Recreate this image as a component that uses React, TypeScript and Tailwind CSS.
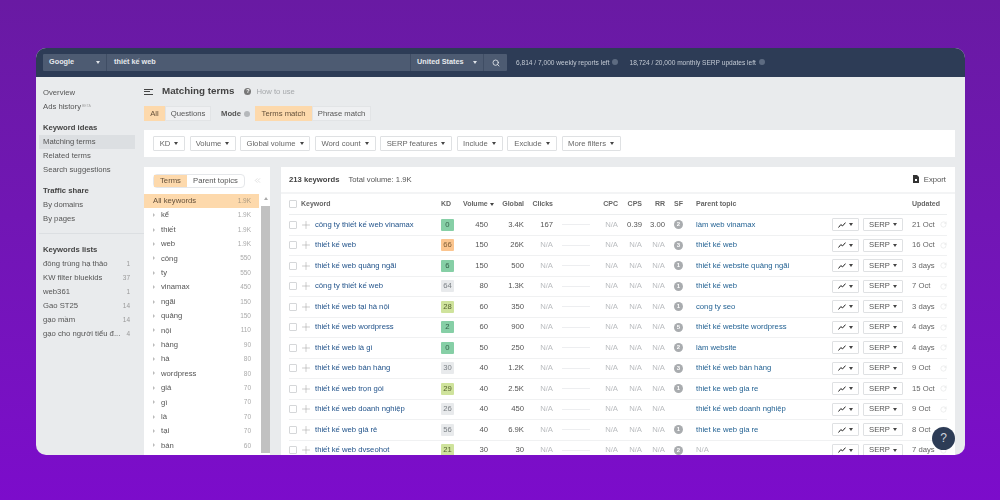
import React from 'react';
import { ChevronsLeft, Plus, RotateCw, Search } from 'lucide-react';

const SIDE_GROUPS = [
  { title: '', items: ['Overview', 'Ads history'] },
  { title: 'Keyword ideas', items: ['Matching terms', 'Related terms', 'Search suggestions'] },
  { title: 'Traffic share', items: ['By domains', 'By pages'] },
];

const LISTS = [
  ['đông trùng hạ thảo', '1'],
  ['KW filter bluekids', '37'],
  ['web361', '1'],
  ['Gao ST25', '14'],
  ['gạo mầm', '14'],
  ['gạo cho người tiểu đ...', '4'],
];

const FILTERS = [
  ['KD', 'w-[32px]'],
  ['Volume', 'w-[46px]'],
  ['Global volume', 'w-[70px]'],
  ['Word count', 'w-[61px]'],
  ['SERP features', 'w-[72px]'],
  ['Include', 'w-[46px]'],
  ['Exclude', 'w-[50px]'],
  ['More filters', 'w-[59px]'],
];

const TERMS = [
  ['kể', '1.9K'], ['thiết', '1.9K'], ['web', '1.9K'], ['công', '550'], ['ty', '550'],
  ['vinamax', '450'], ['ngãi', '150'], ['quảng', '150'], ['nội', '110'], ['hàng', '90'],
  ['hà', '80'], ['wordpress', '80'], ['giá', '70'], ['gì', '70'], ['là', '70'], ['tại', '70'], ['bán', '60'],
];

const KD_COLORS: Record<string, string> = {
  green: 'bg-[#86cfa6] text-[#35614a]',
  orange: 'bg-[#fbc58f] text-[#806038]',
  gray: 'bg-[#e8eaec] text-[#7c8186]',
  lime: 'bg-[#cfe39c] text-[#55632f]',
};

const ROWS = [
  { kw: 'công ty thiết kế web vinamax', kd: '0', kc: 'green', vol: '450', glob: '3.4K', clicks: '167', cpc: 'N/A', cps: '0.39', rr: '3.00', sf: '2', topic: 'làm web vinamax', upd: '21 Oct' },
  { kw: 'thiết kế web', kd: '66', kc: 'orange', vol: '150', glob: '26K', clicks: 'N/A', cpc: 'N/A', cps: 'N/A', rr: 'N/A', sf: '3', topic: 'thiết kế web', upd: '16 Oct' },
  { kw: 'thiết kế web quảng ngãi', kd: '6', kc: 'green', vol: '150', glob: '500', clicks: 'N/A', cpc: 'N/A', cps: 'N/A', rr: 'N/A', sf: '1', topic: 'thiết kế website quảng ngãi', upd: '3 days' },
  { kw: 'công ty thiết kế web', kd: '64', kc: 'gray', vol: '80', glob: '1.3K', clicks: 'N/A', cpc: 'N/A', cps: 'N/A', rr: 'N/A', sf: '1', topic: 'thiết kế web', upd: '7 Oct' },
  { kw: 'thiết kế web tại hà nội', kd: '28', kc: 'lime', vol: '60', glob: '350', clicks: 'N/A', cpc: 'N/A', cps: 'N/A', rr: 'N/A', sf: '1', topic: 'cong ty seo', upd: '3 days' },
  { kw: 'thiết kế web wordpress', kd: '2', kc: 'green', vol: '60', glob: '900', clicks: 'N/A', cpc: 'N/A', cps: 'N/A', rr: 'N/A', sf: '5', topic: 'thiết kế website wordpress', upd: '4 days' },
  { kw: 'thiết kế web là gì', kd: '0', kc: 'green', vol: '50', glob: '250', clicks: 'N/A', cpc: 'N/A', cps: 'N/A', rr: 'N/A', sf: '2', topic: 'làm website', upd: '4 days' },
  { kw: 'thiết kế web bán hàng', kd: '30', kc: 'gray', vol: '40', glob: '1.2K', clicks: 'N/A', cpc: 'N/A', cps: 'N/A', rr: 'N/A', sf: '3', topic: 'thiết kế web bán hàng', upd: '9 Oct' },
  { kw: 'thiết kế web trọn gói', kd: '29', kc: 'lime', vol: '40', glob: '2.5K', clicks: 'N/A', cpc: 'N/A', cps: 'N/A', rr: 'N/A', sf: '1', topic: 'thiet ke web gia re', upd: '15 Oct' },
  { kw: 'thiết kế web doanh nghiệp', kd: '26', kc: 'gray', vol: '40', glob: '450', clicks: 'N/A', cpc: 'N/A', cps: 'N/A', rr: 'N/A', sf: '', topic: 'thiết kế web doanh nghiệp', upd: '9 Oct' },
  { kw: 'thiết kế web giá rẻ', kd: '56', kc: 'gray', vol: '40', glob: '6.9K', clicks: 'N/A', cpc: 'N/A', cps: 'N/A', rr: 'N/A', sf: '1', topic: 'thiet ke web gia re', upd: '8 Oct' },
  { kw: 'thiết kế web dvseohot', kd: '21', kc: 'lime', vol: '30', glob: '30', clicks: 'N/A', cpc: 'N/A', cps: 'N/A', rr: 'N/A', sf: '2', topic: 'N/A', upd: '7 days' },
];

function Caret({ className = 'border-t-[#444]' }: { className?: string }) {
  return <span className={`inline-block w-0 h-0 border-x-[2.5px] border-x-transparent border-t-[3px] ${className}`} />;
}

function NA({ value, className }: { value: string; className: string }) {
  return <div className={`${className} text-right ${value === 'N/A' ? 'text-[#b9bcbf]' : 'text-[#555]'}`}>{value}</div>;
}

function Sidebar() {
  return (
    <aside className="w-[108px] shrink-0 pt-[9px] pl-[3px] text-[7.7px] text-[#555]">
      {SIDE_GROUPS.map((g, i) => (
        <div key={i} className="mb-[7px]">
          {g.title && <div className="h-[14px] leading-[14px] pl-1 font-bold text-[#444]">{g.title}</div>}
          {g.items.map(item => (
            <div key={item} className={`h-[14px] leading-[14px] pl-1 w-[96px] ${item === 'Matching terms' ? 'bg-[#dcdfe2]' : ''}`}>
              {item}
              {item === 'Ads history' && <sup className="text-[3.5px] text-[#aaa] ml-px">BETA</sup>}
            </div>
          ))}
        </div>
      ))}
      <div className="border-t border-[#dcdfe2] w-[105px] mt-[6px] mb-[9px]" />
      <div className="h-[14px] leading-[14px] pl-1 font-bold text-[#444]">Keywords lists</div>
      {LISTS.map(([name, count]) => (
        <div key={name} className="h-[14px] w-[91px] leading-[14px] pl-1 flex justify-between">
          <span className="truncate">{name}</span>
          <span className="text-[6.5px] text-[#999]">{count}</span>
        </div>
      ))}
    </aside>
  );
}

function TermsPanel() {
  return (
    <div className="w-[126px] h-[288px] shrink-0 bg-white overflow-hidden">
      <div className="h-[27px] flex items-center pl-[9px] pr-[8px] justify-between">
        <div className="flex h-[14px] text-[7.7px] leading-[12px] rounded-sm border border-[#e5e7ea]">
          <span className="w-[33px] bg-[#fdd9ac] text-[#64503a] text-center">Terms</span>
          <span className="w-[57px] text-[#555] text-center">Parent topics</span>
        </div>
        <ChevronsLeft size={9} strokeWidth={1.2} className="text-[#bbb]" />
      </div>
      <div className="flex">
        <div className="w-[115px] mr-[2px]">
          <div className="h-[14px] pl-[9px] pr-[8px] flex items-center justify-between bg-[#fdd9ac] text-[7.7px] text-[#64503a]">
            <span>All keywords</span>
            <span className="text-[6.5px] text-[#ab9a80]">1.9K</span>
          </div>
          {TERMS.map(([term, vol]) => (
            <div key={term} className="h-[14.4px] pl-[9px] pr-[8px] flex items-center text-[7.7px] text-[#555]">
              <span className="w-0 h-0 border-y-[2px] border-y-transparent border-l-[2.5px] border-l-[#bbb] mr-[6px]" />
              <span className="flex-1">{term}</span>
              <span className="text-[6.5px] text-[#aaa]">{vol}</span>
            </div>
          ))}
        </div>
        <div className="w-[9px] flex flex-col">
          <div className="h-[12px] flex justify-center pt-[3px]">
            <span className="w-0 h-0 border-x-[2.5px] border-x-transparent border-b-[3px] border-b-[#aaa]" />
          </div>
          <div className="flex-1 bg-[#c1c1c1] h-[260px]" />
        </div>
      </div>
    </div>
  );
}

function ChartIcon() {
  return (
    <svg width="8" height="6" viewBox="0 0 8 6" fill="none" stroke="#222" strokeWidth="1">
      <polyline points="0.5,5.5 2.8,2.6 4.6,3.9 7.5,0.6" />
    </svg>
  );
}

function KeywordRow({ row }: { row: (typeof ROWS)[number] }) {
  return (
    <div className="h-[20.5px] flex items-center border-b border-[#f0f1f2] text-[7.7px]">
      <span className="w-[8px] h-[8px] border border-[#d5d7d9] rounded-[1px] mr-[3px] shrink-0" />
      <Plus size={12} strokeWidth={1} className="text-[#999] mr-[3px] shrink-0" />
      <span className="w-[126px] shrink-0 text-[#1f5189] truncate">{row.kw}</span>
      <span className={`w-[13px] h-[12px] leading-[12px] text-center shrink-0 rounded-[1px] ${KD_COLORS[row.kc]}`}>{row.kd}</span>
      <div className="w-[34px] text-right text-[#555] shrink-0">{row.vol}</div>
      <div className="w-[36px] text-right text-[#555] shrink-0">{row.glob}</div>
      <NA value={row.clicks} className="w-[29px] shrink-0" />
      <div className="w-[28px] h-px bg-[#edeef0] ml-[9px] shrink-0" />
      <NA value={row.cpc} className="w-[28px] shrink-0" />
      <NA value={row.cps} className="w-[24px] shrink-0" />
      <NA value={row.rr} className="w-[23px] shrink-0" />
      <div className="w-[9px] ml-[9px] shrink-0">
        {row.sf && (
          <span className="block w-[9px] h-[9px] rounded-full bg-[#a9acaf] text-white text-[6px] leading-[9px] text-center font-bold">{row.sf}</span>
        )}
      </div>
      <div className={`w-[136px] ml-[13px] shrink-0 truncate ${row.topic === 'N/A' ? 'text-[#b9bcbf]' : 'text-[#1f5f91]'}`}>{row.topic}</div>
      <span className="w-[27px] h-[13px] border border-[#dfe1e3] rounded-[1px] flex items-center justify-center gap-[3px] shrink-0">
        <ChartIcon />
        <Caret />
      </span>
      <span className="w-[40px] h-[13px] ml-[4px] border border-[#dfe1e3] rounded-[1px] flex items-center justify-center gap-[3px] text-[#555] shrink-0">
        SERP
        <Caret />
      </span>
      <span className="w-[28px] ml-[9px] text-[#666] shrink-0 whitespace-nowrap">{row.upd}</span>
      <RotateCw size={7} strokeWidth={1} className="text-[#c4c6c8] shrink-0" />
    </div>
  );
}

function KeywordsPanel() {
  return (
    <div className="flex-1 h-[288px] ml-[11px] bg-white overflow-hidden">
      <div className="h-[27px] flex items-center justify-between pl-[8px] pr-[9px] border-b-2 border-[#f3f4f5] text-[7.7px] text-[#555]">
        <div className="flex gap-[9px]">
          <span className="font-bold text-[#444]">213 keywords</span>
          <span>Total volume: 1.9K</span>
        </div>
        <div className="flex items-center gap-[4px]">
          <svg width="8" height="8" viewBox="0 0 8 8">
            <path d="M1 0h4l2 2v6H1z" fill="#333" />
            <rect x="3" y="4" width="2" height="2" fill="#fff" />
          </svg>
          Export
        </div>
      </div>
      <div className="pl-[8px] pr-[8px]">
        <div className="h-[21px] flex items-center border-b border-[#eceeef] text-[7px] font-bold text-[#666]">
          <span className="w-[8px] h-[8px] border border-[#d5d7d9] rounded-[1px] mr-[4px] shrink-0" />
          <span className="w-[140px] shrink-0">Keyword</span>
          <span className="w-[22px] shrink-0">KD</span>
          <span className="w-[32px] shrink-0 whitespace-nowrap flex items-center gap-[2px]">Volume <Caret /></span>
          <span className="w-[29px] text-right shrink-0">Global</span>
          <span className="w-[29px] text-right shrink-0">Clicks</span>
          <span className="w-[65px] text-right shrink-0">CPC</span>
          <span className="w-[24px] text-right shrink-0">CPS</span>
          <span className="w-[23px] text-right shrink-0">RR</span>
          <span className="w-[18px] text-right shrink-0">SF</span>
          <span className="w-[216px] ml-[13px] shrink-0">Parent topic</span>
          <span className="shrink-0">Updated</span>
        </div>
        {ROWS.map(row => <KeywordRow key={row.kw} row={row} />)}
      </div>
    </div>
  );
}

export default function App() {
  return (
    <div
      className="w-[1000px] h-[500px] overflow-hidden bg-gradient-to-b from-[#691aa3] to-[#7c0ccb] pt-[48px] pl-[36px]"
      style={{ fontFamily: '"Liberation Sans", Arial, sans-serif' }}
    >
      <div className="relative w-[929px] h-[407px] rounded-[10px] overflow-hidden bg-[#e9ebed] flex flex-col blur-[0.25px]">
        {/* Top bar */}
        <header className="h-[29px] shrink-0 bg-[#2d3c56] flex items-center pl-[7px] text-[7.3px]">
          <div className="h-[17px] flex items-center bg-[#4d5b72] text-[#e6e9ed] rounded-[1px]">
            <div className="w-[64px] h-full flex items-center justify-between pl-[6px] pr-[6px] border-r border-[#3f4d64] font-bold">
              Google <Caret className="border-t-[#dfe3e8]" />
            </div>
            <div className="w-[303px] pl-[7px] font-bold">thiết kế web</div>
            <div className="w-[74px] h-full flex items-center justify-between pl-[6px] pr-[6px] border-x border-[#3f4d64] font-bold">
              United States <Caret className="border-t-[#dfe3e8]" />
            </div>
            <div className="w-[23px] flex justify-center">
              <Search size={8} strokeWidth={2.5} />
            </div>
          </div>
          <div className="ml-[9px] flex items-center gap-[3px] text-[6.6px] text-[#c3cad4]">
            6,814 / 7,000 weekly reports left
            <span className="w-[6px] h-[6px] rounded-full bg-[#5d6b81]" />
          </div>
          <div className="ml-[11px] flex items-center gap-[3px] text-[6.6px] text-[#c3cad4]">
            18,724 / 20,000 monthly SERP updates left
            <span className="w-[6px] h-[6px] rounded-full bg-[#5d6b81]" />
          </div>
        </header>

        <div className="flex flex-1 min-h-0">
          <Sidebar />
          <main className="flex-1 min-w-0 pr-[10px]">
            {/* Title */}
            <div className="h-[29px] flex items-center text-[#444]">
              <div className="w-[9px] flex flex-col gap-[1.5px] mr-[9px]">
                <span className="h-px bg-[#444]" />
                <span className="h-px bg-[#444] w-[6px]" />
                <span className="h-px bg-[#444]" />
              </div>
              <h1 className="text-[9.8px] font-bold">Matching terms</h1>
              <span className="w-[7px] h-[7px] rounded-full bg-[#777] text-white text-[5.5px] leading-[7px] text-center font-bold ml-[10px]">?</span>
              <span className="ml-[5px] text-[7.7px] text-[#a5a8ab]">How to use</span>
            </div>

            {/* Mode switches */}
            <div className="h-[15px] flex items-center text-[7.7px] text-[#555]">
              <span className="w-[21px] h-full leading-[15px] text-center bg-[#fdd9ac] text-[#64503a]">All</span>
              <span className="w-[46px] h-full leading-[13px] text-center bg-[#eff0f2] border border-[#e2e4e6]">Questions</span>
              <span className="ml-[10px] font-bold">Mode</span>
              <span className="w-[6px] h-[6px] rounded-full bg-[#b5b8bb] ml-[3px]" />
              <span className="ml-[5px] w-[57px] h-full leading-[15px] text-center bg-[#fdd9ac] text-[#64503a]">Terms match</span>
              <span className="w-[59px] h-full leading-[13px] text-center bg-[#eff0f2] border border-[#e2e4e6]">Phrase match</span>
            </div>

            {/* Filters */}
            <div className="h-[27px] mt-[9px] bg-white flex items-center gap-[4.5px] pl-[9px]">
              {FILTERS.map(([label, width]) => (
                <span key={label} className={`${width} h-[15px] border border-[#dfe1e3] rounded-[1px] flex items-center justify-center gap-[4px] text-[7.7px] text-[#666] whitespace-nowrap`}>
                  {label}
                  <Caret />
                </span>
              ))}
            </div>

            {/* Tables */}
            <div className="flex mt-[10px]">
              <TermsPanel />
              <KeywordsPanel />
            </div>
          </main>
        </div>

        <div className="absolute right-[10px] bottom-[5px] w-[23px] h-[23px] rounded-full bg-[#2d3c56] text-[#cfd5dd] text-[12px] leading-[23px] text-center">?</div>
      </div>
    </div>
  );
}
